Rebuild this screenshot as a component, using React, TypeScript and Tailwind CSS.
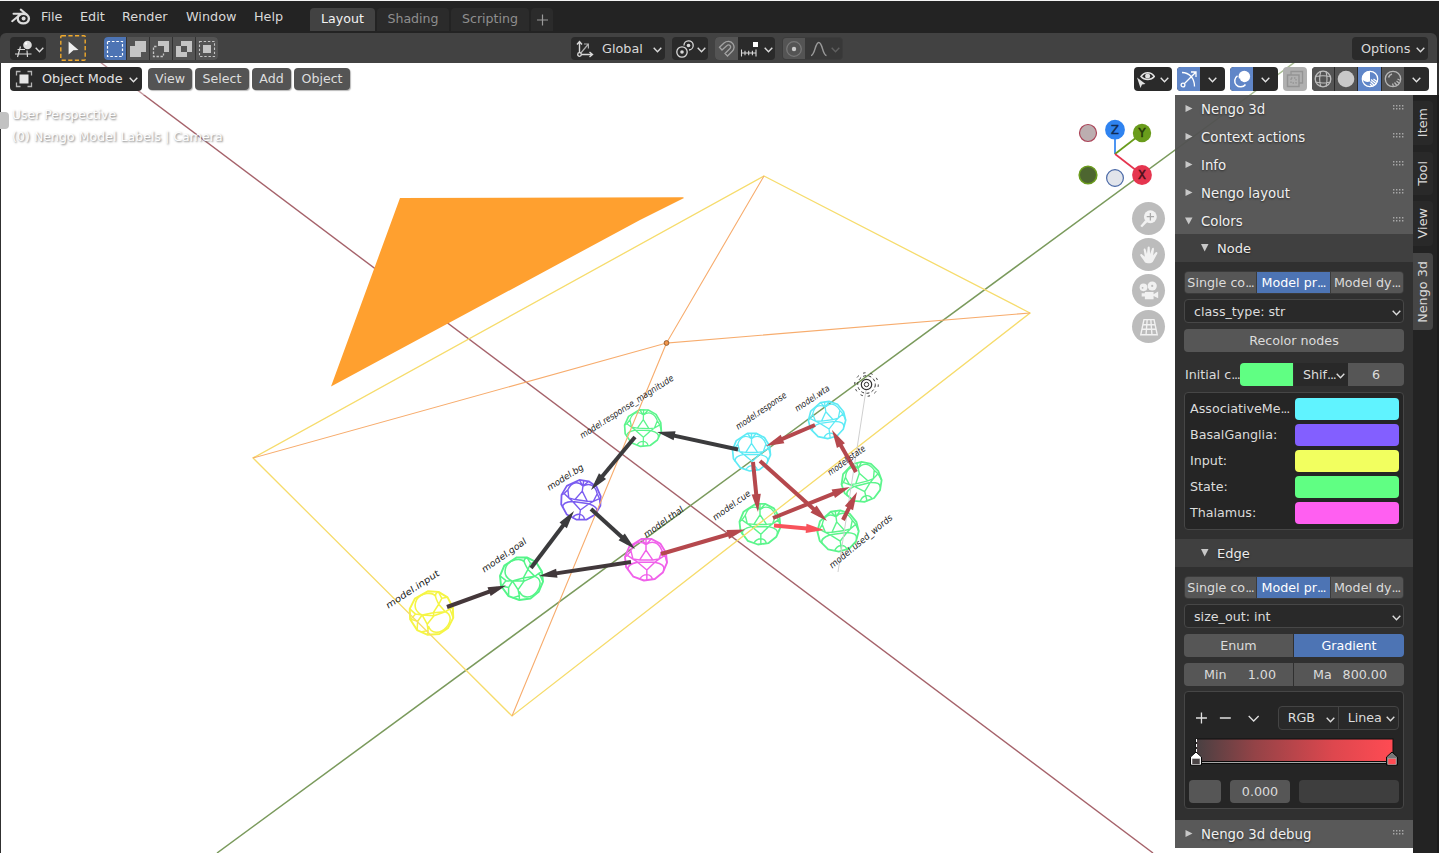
import React from "react";

type Kids = { children?: React.ReactNode };

const Chevron = ({ className = "" }: { className?: string }) => (
  <svg width="9" height="6" viewBox="0 0 9 6" className={"shrink-0 " + className}>
    <path d="M.7 .8l3.8 3.900L8.300 .8" fill="none" stroke="currentColor" strokeWidth="1.4" />
  </svg>
);

const Icon = ({ children, className = "" }: Kids & { className?: string }) => (
  <svg width="18" height="18" viewBox="0 0 18 18" fill="none" stroke="currentColor" strokeWidth="1.3" className={"shrink-0 " + className}>
    {children}
  </svg>
);

const Dots = () => <span className="tracking-[-1.2px]">...</span>;

/* ---------- Scene ---------- */

const OUTLINE = "M-.22 -.98H.25L.68 -.76L.95 -.32L1 .15L.8 .62L.42 .93L-.1 1L-.6 .82L-.95 .35L-1 -.12L-.8 -.6Z";

/* Facing triangles in the middle, one rounded facet in each quadrant. */
const FRONT =
  "M0 -.45L-.3 .02H.32ZM-.4 .13H.42L.04 .5ZM0 -.45V-1M.04 .5V1" +
  "M-.4 .13L-.62 -.02L-.3 .02M.42 .13L.62 -.02L.32 .02M-.62 -.02L-.88 -.2L-.72 -.42L-.62 -.02M.62 -.02L.9 -.2L.76 -.42L.62 -.02" +
  "M0 -.7L-.22 -.98M0 -.7L.25 -.98M-.88 -.2L-1 -.12M.9 -.2L1 .15" +
  "M0 -.7C-.3 -.95 -.6 -.8 -.72 -.42M0 -.7C.3 -.95 .62 -.8 .76 -.42" +
  "M-.4 .13C-.75 .2 -.9 .3 -.86 .5M.42 .13C.75 .2 .9 .3 .84 .5M.04 .72C-.15 .72 -.25 .85 -.3 .93M.04 .72C.2 .72 .3 .85 .3 .95";

/* Turned so that two large facets sit on opposite corners. */
const TURNED =
  "M.3 -.42L.08 -.02L.62 -.1ZM-.42 .12L.12 .12L-.16 .52ZM.08 -.02L-.42 .12M.08 -.02L.12 .12M.62 -.1L.12 .12" +
  "M.3 -.42C.1 -.75 .05 -.9 .25 -.98M.3 -.42L.42 -.7L.25 -.98M.42 -.7L.68 -.76M.62 -.1L.82 -.25L.95 -.32M.82 -.25L1 .15" +
  "M-.42 .12L-.72 .1L-1 -.12M-.72 .1L-.92 .35M-.42 .12L-.6 .42L-.92 .35M-.6 .42L-.6 .82M-.16 .52L-.1 .8L-.1 1M-.1 .8L-.42 .9" +
  "M-.42 .12C-.7 0 -.85 -.2 -.72 -.55C-.55 -.9 0 -.98 .15 -.75M-.1 .6C.05 .95 .45 .95 .72 .6C.95 .3 .9 0 .62 -.1";

type Ball = { x: number; y: number; r: number; c: string; a: number; turned?: boolean };
const balls: Ball[] = [
  { x: 431.5, y: 613, r: 22, c: "#f5f545", a: 4, turned: true },
  { x: 521.5, y: 578.5, r: 21.5, c: "#55f589", a: 0, turned: true },
  { x: 581, y: 500, r: 20, c: "#7a5cf0", a: 8 },
  { x: 643, y: 428, r: 18.5, c: "#5cf58c", a: 2 },
  { x: 646, y: 559.5, r: 21, c: "#f061ea", a: 0 },
  { x: 751.5, y: 452, r: 19, c: "#5eeaf5", a: 0 },
  { x: 827, y: 420, r: 18.5, c: "#5eeaf5", a: -8 },
  { x: 861.5, y: 482, r: 20, c: "#5cf58c", a: -14 },
  { x: 760, y: 524, r: 20.5, c: "#5cf58c", a: 0 },
  { x: 838, y: 531, r: 20.5, c: "#5cf58c", a: -8 },
];

type Edge = [number, number, number, number, string];
const edges: Edge[] = [
  [447, 607, 506, 585.5, "#44373a"],
  [531, 568, 574, 511, "#3b3b3d"],
  [591, 509, 635, 549, "#3b3b3d"],
  [635, 437, 591, 490, "#3b3b3d"],
  [631, 562, 539, 576, "#41383b"],
  [738, 449.5, 657, 432, "#3b3b3d"],
  [661, 554, 745, 529.5, "#b5484d"],
  [773, 518, 850, 487, "#b5484d"],
  [774, 525.5, 824, 530, "#f8535b"],
  [753, 462, 758, 512, "#b5484d"],
  [760, 461, 827, 521, "#b5484d"],
  [843, 520, 857, 492, "#b5484d"],
  [856, 472, 832, 430, "#b5484d"],
  [815, 425, 766, 446, "#b5484d"],
];

const Arrow = ({ e }: { e: Edge }) => {
  const [x1, y1, x2, y2, c] = e;
  const len = Math.hypot(x2 - x1, y2 - y1);
  const ang = (Math.atan2(y2 - y1, x2 - x1) * 180) / Math.PI;
  return (
    <g transform={`translate(${x1} ${y1}) rotate(${ang})`} fill={c}>
      <rect x="0" y="-2" width={len - 9} height="4" />
      <path d={`M${len - 18} -4.6L${len} 0L${len - 18} 4.6Z`} />
    </g>
  );
};

type Label = [string, number, number, number, number];
const labels: Label[] = [
  ["model.input", 388, 609, 440, 575],
  ["model.goal", 484, 573, 527, 543],
  ["model.bg", 549, 491, 584, 469],
  ["model.response_magnitude", 582, 439, 674, 380],
  ["model.thal", 646, 538, 684, 511],
  ["model.response", 738, 430, 787, 397],
  ["model.wta", 797, 412, 830, 390],
  ["model.state", 830, 476, 866, 450],
  ["model.cue", 715, 521, 751, 495],
  ["model.used_words", 832, 569, 893, 519],
];

const SceneLabel = ({ l }: { l: Label }) => {
  const [t, x1, y1, x2, y2] = l;
  const len = Math.hypot(x2 - x1, y2 - y1);
  const ang = (Math.atan2(y2 - y1, x2 - x1) * 180) / Math.PI;
  return (
    <text
      transform={`translate(${x1} ${y1}) rotate(${ang}) skewX(-8)`}
      textLength={len}
      lengthAdjust="spacingAndGlyphs"
      fontSize="9"
      fill="#1c1c1c"
    >
      {t}
    </text>
  );
};

const Scene = () => (
  <svg className="absolute inset-0" width="1439" height="790" viewBox="0 63 1439 790" fontFamily="DejaVu Sans, sans-serif">
    <rect x="1" y="63" width="1436" height="790" fill="#fff" />
    <path d="M100 62L1153 853" stroke="#a5626a" strokeWidth="1.4" />
    <path d="M217 853L1295 62" stroke="#7a9a5c" strokeWidth="1.5" />
    <path d="M400 198L683 197.3L684 198L640 220L331 386.5Z" fill="#ffa02f" />
    {balls.map((b, i) => (
      <g key={i} transform={`translate(${b.x} ${b.y}) rotate(${b.a}) scale(${b.r})`} fill="none" stroke={b.c} strokeLinejoin="round">
        <path d={OUTLINE} strokeWidth=".09" />
        <path d={b.turned ? TURNED : FRONT} strokeWidth=".07" />
      </g>
    ))}
    <path d="M764 176L1030 313L512 716L253 458Z" fill="none" stroke="#f6dc6c" strokeWidth="1.3" />
    <path d="M764 176L666.5 343L1030 313M253 458L666.5 343L512 716" fill="none" stroke="#f7ac6d" strokeWidth="1.1" />
    <circle cx="666.5" cy="343" r="2.4" fill="#f3954a" stroke="#7d4b22" strokeWidth=".8" />
    <path d="M866 390L838 572" stroke="#cfcfcf" strokeWidth="1" />
    <g fill="none" stroke="#333">
      <circle cx="866.5" cy="384.5" r="2.2" strokeWidth="1" />
      <circle cx="866.5" cy="384.5" r="5.2" strokeWidth="1.2" />
      <circle cx="866.5" cy="384.5" r="8.8" strokeDasharray="3 2.4" strokeWidth="1" />
      <circle cx="866.5" cy="384.5" r="11.8" strokeDasharray="2.4 5" strokeWidth="1" />
    </g>
    {edges.map((e, i) => (
      <Arrow key={i} e={e} />
    ))}
    {labels.map((l) => (
      <SceneLabel key={l[0]} l={l} />
    ))}
  </svg>
);

const AxisGizmo = () => (
  <svg className="absolute left-[1074px] top-[23px]" width="82" height="76" viewBox="1074 118 82 76" fontFamily="DejaVu Sans, sans-serif" fontSize="11.5" textAnchor="middle">
    <g strokeWidth="1.7">
      <path d="M1115 154V138" stroke="#2f83f0" />
      <path d="M1115 154L1137 137" stroke="#6a9c1c" />
      <path d="M1115 154L1137 171" stroke="#e5354f" />
    </g>
    <circle cx="1088" cy="133" r="8.5" fill="#bcaeb0" stroke="#ab4458" strokeWidth="1.2" />
    <circle cx="1088" cy="175" r="8.8" fill="#4d6630" stroke="#6b9c1e" strokeWidth="1.6" />
    <circle cx="1115" cy="178" r="8.4" fill="#e2e5eb" stroke="#4968a6" strokeWidth="1.2" />
    <circle cx="1115" cy="129.7" r="9.9" fill="#2f83f0" />
    <circle cx="1142" cy="133" r="9.2" fill="#6a9c1c" />
    <circle cx="1142" cy="175" r="9.9" fill="#e5354f" />
    <g strokeWidth=".5">
      <text x="1115" y="134" fill="#102c55" stroke="#102c55">Z</text>
      <text x="1142" y="137" fill="#24370a" stroke="#24370a">Y</text>
      <text x="1142" y="179" fill="#4d101b" stroke="#4d101b">X</text>
    </g>
  </svg>
);

const NavButton = ({ children }: Kids) => (
  <div className="flex h-[33px] w-[33px] items-center justify-center rounded-full bg-[#bcbcbc]">
    <svg width="22" height="22" viewBox="0 0 24 24" fill="#f1f1f1" stroke="none">
      {children}
    </svg>
  </div>
);

/* ---------- Top bar ---------- */

const TopBar = () => (
  <div className="flex h-[33px] shrink-0 border-t border-[#f4f4f4] bg-[#232323] text-[12.8px] text-[#d9d9d9]">
    <svg className="ml-[11px] mt-[7px] shrink-0" width="20" height="18" viewBox="0 0 20 18" fill="none" stroke="#dcdcdc">
      <ellipse cx="12.3" cy="10.6" rx="5.6" ry="4.8" strokeWidth="2.4" />
      <circle cx="12.6" cy="10.4" r="2" fill="#dcdcdc" stroke="none" />
      <path d="M15.5 6.2L9.8 1.6M2.5 5.8H12M1.2 13.2L9.5 6.3" strokeWidth="2" strokeLinecap="round" />
    </svg>
    <div className="flex h-[31px] items-center pl-[10px]">
      <span className="w-[39px]">File</span>
      <span className="w-[42px]">Edit</span>
      <span className="w-16">Render</span>
      <span className="w-[68px]">Window</span>
      <span className="w-[56px]">Help</span>
    </div>
    <div className="mt-[7px] flex h-[23px] gap-[2px] text-[12.6px] text-[#8f8f8f]">
      <div className="flex w-[65px] items-center justify-center rounded-t bg-[#424242] text-[#f2f2f2]">Layout</div>
      <div className="flex w-[72px] items-center justify-center rounded-t bg-[#2b2b2b]">Shading</div>
      <div className="flex w-[78px] items-center justify-center rounded-t bg-[#2b2b2b]">Scripting</div>
      <div className="flex w-[22px] items-center justify-center rounded-t bg-[#2b2b2b]">
        <svg width="12" height="12" viewBox="0 0 12 12" stroke="#9a9a9a" strokeWidth="1.2">
          <path d="M6.500 .5v11M1 6h11" />
        </svg>
      </div>
    </div>
  </div>
);

/* ---------- Tool settings ---------- */

const Dark = ({ children, className = "" }: Kids & { className?: string }) => (
  <div className={"flex h-[23px] shrink-0 items-center rounded bg-[#2a2a2a] text-[#d9d9d9] " + className}>{children}</div>
);

const ToolSettings = () => (
  <div className="h-[30px] shrink-0 bg-[#232323] pr-[2px]">
    <div className="flex h-[30px] items-center rounded-t-md bg-[#424242] pl-[10px] pt-px text-[12.8px]">
      <Dark className="w-9 gap-[2px] pl-[5px]">
        <Icon>
          <path d="M2.500 9.500H10M0 14H16.500M5.500 6.500L2.500 17M12 10.500L12.500 17" strokeWidth="1.200" />
          <circle cx="12.5" cy="5" r="4.3" fill="#dcdcdc" stroke="none" />
          <circle cx="11" cy="3.500" r="1.2" fill="#fff" stroke="none" />
        </Icon>
        <Chevron className="mt-[2px]" />
      </Dark>
      <svg className="ml-[14px] -mt-px shrink-0" width="26" height="26" viewBox="0 0 26 26">
        <rect x=".8" y=".8" width="24.4" height="24.4" rx="1" fill="#4a4a4a" stroke="#f0a92c" strokeWidth="1.4" strokeDasharray="4.2 2.4" />
        <path d="M8.600 6.500L18.500 15L13.400 15.300L8.600 19.500Z" fill="#efefef" />
      </svg>
      <div className="ml-[18px] flex h-[23px] gap-px overflow-hidden rounded bg-[#333] text-[#c4c4c4]">
        <div className="flex w-[22px] items-center justify-center bg-[#4d74b4] text-white">
          <Icon>
            <rect x="1.5" y="1.5" width="15" height="15" strokeDasharray="2.6 1.8" strokeWidth="1.2" />
          </Icon>
        </div>
        <div className="flex w-[22px] items-center justify-center bg-[#545454]">
          <Icon>
            <path d="M6 1h11v11h-5v5H1V6h5z" fill="currentColor" stroke="none" />
          </Icon>
        </div>
        <div className="flex w-[22px] items-center justify-center bg-[#545454]">
          <Icon>
            <path d="M6 1h11v11h-5V6H6z" fill="currentColor" stroke="none" />
            <path d="M4.500 6.500h-3v10h10v-3" strokeDasharray="2.400 1.600" />
          </Icon>
        </div>
        <div className="flex w-[22px] items-center justify-center bg-[#545454]">
          <Icon>
            <path fillRule="evenodd" d="M6 1h11v11h-5v5H1V6h5zM6 6v6h6V6z" fill="currentColor" stroke="none" />
          </Icon>
        </div>
        <div className="flex w-[22px] items-center justify-center bg-[#545454]">
          <Icon>
            <rect x="5" y="5" width="8" height="8" fill="currentColor" stroke="none" />
            <rect x="1.500" y="1.500" width="15" height="15" strokeDasharray="2.400 1.800" strokeWidth="1.100" />
          </Icon>
        </div>
      </div>
      <Dark className="ml-[353px] w-[94px] pl-[5px]">
        <Icon className="mr-2">
          <path d="M3.500 14.500V2M1 4.500L3.500 1.500L6 4.500M3.500 14.500H16M13.500 12L16.500 14.500L13.500 17" strokeWidth="1.400" />
          <path d="M4 14L12 4.500M8 4h4.400v4.400" strokeWidth="1.200" opacity=".75" />
          <circle cx="3.500" cy="14.500" r="1.800" fill="#2a2a2a" />
        </Icon>
        Global
        <Chevron className="ml-auto mr-[3px] mt-[2px]" />
      </Dark>
      <Dark className="ml-[7px] w-9 gap-[3px] pl-[4px]">
        <Icon>
          <path d="M8 5.500A4.600 4.600 0 1 1 13 10" />
          <circle cx="6" cy="12" r="5.200" />
          <circle cx="12.500" cy="5.500" r="1.800" fill="currentColor" stroke="none" />
          <circle cx="6" cy="12" r="1.800" fill="currentColor" stroke="none" />
        </Icon>
        <Chevron className="mt-[2px]" />
      </Dark>
      <Dark className="ml-[7px] w-[60px] overflow-hidden">
        <div className="flex h-full w-[23px] items-center justify-center bg-[#545454] text-[#a2a2a2]">
          <Icon>
            <path d="M1.500 7.200L6 3C9 .5 13 1 15 3.800C17 7 16 9.500 14 11.500L9.500 16L7 13.500L11.500 9C13 7.500 13 6.500 12 5.500C11 4.500 9.800 4.800 8.500 6L4 10Z" />
          </Icon>
        </div>
        <Icon className="ml-[2px] overflow-visible">
          <path d="M1.500 9.500v7M16 9.500v7M1.500 13H16M5 10.800v4.500M8.700 10.800v4.500M12.400 10.800v4.500" strokeWidth="1.100" />
          <rect x="13" y="2" width="5" height="5" fill="#fff" stroke="none" />
        </Icon>
        <Chevron className="ml-[6px] mt-[2px]" />
      </Dark>
      <div className="ml-[7px] flex h-[23px] w-[61px] shrink-0 items-center overflow-hidden rounded border border-[#3c3c3c] bg-[#383838]">
        <div className="flex h-full w-[22px] items-center justify-center bg-[#545454] text-[#777]">
          <Icon>
            <circle cx="9" cy="9" r="7.300" />
            <circle cx="9" cy="9" r="2.200" fill="#c9c9c9" stroke="none" />
          </Icon>
        </div>
        <Icon className="ml-[5px] text-[#999]">
          <path d="M1 15.500C5 15.500 5 2.500 8.800 2.500S12.500 15.500 16.500 15.500" strokeWidth="1.500" />
        </Icon>
        <Chevron className="ml-[3px] mt-[2px] text-[#606060]" />
      </div>
      <Dark className="ml-auto mr-[9px] w-[76px] pl-[9px]">
        Options
        <Chevron className="ml-auto mr-[3px] mt-[2px]" />
      </Dark>
    </div>
  </div>
);

/* ---------- Viewport header ---------- */

const MenuButton = ({ children, className = "" }: Kids & { className?: string }) => (
  <div className={"flex h-[22px] items-center justify-center rounded bg-[#545454] text-[#dedede] shadow-[1px_1px_1px_#bbb] " + className}>{children}</div>
);

const Group = ({ children, className = "" }: Kids & { className?: string }) => (
  <div className={"flex h-6 shrink-0 items-center overflow-hidden rounded-[4px] bg-[#2a2a2a] text-[#e2e2e2] " + className}>{children}</div>
);

const Cell = ({ children, className = "" }: Kids & { className?: string }) => (
  <div className={"flex h-full w-[23px] items-center justify-center " + className}>{children}</div>
);

const ViewportHeader = () => (
  <div className="relative mr-[2px] ml-px flex h-8 shrink-0 items-center bg-white/35 pl-[9px] pr-[8px] text-[12.6px]">
    <Group className="w-[132px] pl-[5px] text-[12.800px]">
      <Icon className="mr-[9px]">
        <rect x="4.500" y="4.500" width="9" height="9" fill="#e6e6e6" stroke="none" />
        <path d="M1.500 5.500v-4h4M12.500 1.500h4v4M16.500 12.500v4h-4M5.500 16.500h-4v-4" stroke="#b5b5b5" />
      </Icon>
      Object Mode
      <Chevron className="ml-auto mr-[4px] mt-[2px]" />
    </Group>
    <MenuButton className="ml-[6px] w-[44px]">View</MenuButton>
    <MenuButton className="ml-[3px] w-[54px]">Select</MenuButton>
    <MenuButton className="ml-[3px] w-[39px]">Add</MenuButton>
    <MenuButton className="ml-[3px] w-[56px]">Object</MenuButton>
    <div className="ml-auto flex gap-[5px]">
      <Group className="w-[38px] gap-[5px] pl-[3px]">
        <Icon>
          <path d="M4 6.500C7.500 1.500 14 1.500 17.300 6.500C14 10.500 7.500 10.500 4 6.500Z" strokeWidth="1.500" />
          <circle cx="10.600" cy="6" r="2.500" fill="currentColor" stroke="none" />
          <path d="M0 7.500L8.500 14L5 14.500L3.500 18Z" fill="currentColor" stroke="none" />
        </Icon>
        <Chevron className="mt-[2px]" />
      </Group>
      <Group className="w-12">
        <Cell className="bg-[#6086c8] text-white">
          <Icon>
            <path d="M2 2.500C9 2.500 14.500 8 14.500 16.500M4.500 13.500L15.500 2.500M11 2h5v5" strokeWidth="1.300" />
            <circle cx="3" cy="15" r="1.900" />
          </Icon>
        </Cell>
        <Cell className="w-[25px]">
          <Chevron className="mt-[2px]" />
        </Cell>
      </Group>
      <Group className="w-12">
        <Cell className="bg-[#6086c8] text-white">
          <Icon>
            <circle cx="11.300" cy="6.500" r="5.800" fill="currentColor" stroke="none" />
            <path d="M4.500 5.800A6 6 0 1 0 12.500 14.500" strokeWidth="1.500" />
            <path d="M6.500 8.500A4 4 0 0 0 10 12.500" stroke="#6086c8" />
          </Icon>
        </Cell>
        <Cell className="w-[25px]">
          <Chevron className="mt-[2px]" />
        </Cell>
      </Group>
      <div className="flex h-6 w-6 items-center justify-center rounded-[4px] bg-[#b0b0b0] text-[#949494]">
        <Icon>
          <path d="M5 5V1.500h11.500V13H13" />
          <rect x="1.500" y="5" width="11.500" height="11.500" strokeWidth="1.500" />
          <rect x="5" y="8" width="5" height="5" strokeDasharray="1.500 1.500" />
        </Icon>
      </div>
      <Group className="w-[117px] gap-px">
        <Cell className="w-[22px] bg-[#545454] text-[#bdbdbd]">
          <Icon>
            <circle cx="9" cy="9" r="7.800" />
            <path d="M1.500 6.500Q9 5 16.500 6.500M1.500 12Q9 14 16.500 12M6.800 1.500Q4.500 9 6.800 16.500M12 1.500Q14 9 12 16.500" strokeWidth="1.100" />
          </Icon>
        </Cell>
        <Cell className="w-[22px] bg-[#545454] text-[#c9c9c9]">
          <Icon>
            <circle cx="9" cy="9" r="8.300" fill="currentColor" stroke="none" />
          </Icon>
        </Cell>
        <Cell className="w-[22px] bg-[#6086c8] text-white">
          <Icon>
            <circle cx="9" cy="9" r="7.700" />
            <path d="M9 9V1.300A7.700 7.700 0 0 0 1.300 9Z" fill="currentColor" stroke="none" />
            <path d="M9 9V1.300A7.700 7.700 0 0 0 1.300 9C3 11.500 6 12.500 9 11.500Z" fill="currentColor" stroke="none" />
            <path d="M10 9.500L15.500 14M12.500 9L16.500 12M9.500 11.500L13.500 15.500M9 14L11.500 16.500" />
          </Icon>
        </Cell>
        <Cell className="w-[22px] bg-[#545454] text-[#b5b5b5]">
          <Icon>
            <circle cx="9" cy="9" r="7.700" />
            <path d="M4.500 7.500A5 5 0 0 1 8 4" strokeWidth="1.600" />
            <path d="M13.500 9L16.500 10.500M12.500 11L15.500 13.500M10.500 12.500L13 15.500M8.500 13.500L9.500 16.500" strokeWidth="1.300" />
          </Icon>
        </Cell>
        <Cell className="w-[25px]">
          <Chevron className="mt-[2px]" />
        </Cell>
      </Group>
    </div>
  </div>
);

/* ---------- Sidebar ---------- */

const Grip = () => (
  <svg className="mb-[5px] ml-auto mr-[8px]" width="12" height="5" viewBox="0 0 12 5" fill="#a8a8a8">
    <path d="M0 0h1.400v1.400H0zM3 0h1.400v1.400H3zM6 0h1.400v1.400H6zM9 0h1.400v1.400H9zM0 3h1.400v1.400H0zM3 3h1.400v1.400H3zM6 3h1.400v1.400H6zM9 3h1.400v1.400H9z" />
  </svg>
);

const PanelHeader = ({ title, open }: { title: string; open?: boolean }) => (
  <div className="flex h-7 shrink-0 items-center bg-[#525252]/96 pl-[9px] pt-[2px] text-[13.3px] text-[#f0f0f0] [text-shadow:0_1px_2px_#0008]">
    <svg width="9" height="9" viewBox="0 0 9 9" fill="#c8c8c8" className="mb-[4px] mr-2">
      <path d={open ? "M1 1.500H8.500L4.700 8.500Z" : "M1.500 1V8L8.500 4.500Z"} />
    </svg>
    {title}
    <Grip />
  </div>
);

const SubHeader = ({ title }: { title: string }) => (
  <div className="flex h-7 shrink-0 items-center bg-[#404040] pl-[25px] pt-[2px] text-[13px] text-[#ececec] [text-shadow:0_1px_2px_#0008]">
    <svg width="9" height="9" viewBox="0 0 9 9" fill="#c8c8c8" className="mb-[3px] mr-2">
      <path d="M1 1H8.500L4.700 8.500Z" />
    </svg>
    {title}
  </div>
);

const ModeTabs = () => (
  <div className="flex h-[23px] shrink-0 gap-px overflow-hidden rounded border border-[#3b3b3b] bg-[#3b3b3b] text-[12.700px] text-[#dcdcdc]">
    <div className="flex w-[71px] items-center justify-center bg-[#565656]">Single co<Dots /></div>
    <div className="flex w-[73px] items-center justify-center bg-[#4d74b4] text-white">Model pr<Dots /></div>
    <div className="flex flex-1 items-center justify-center bg-[#565656]">Model dy<Dots /></div>
  </div>
);

const Dropdown = ({ children }: Kids) => (
  <div className="mt-[5px] flex h-6 shrink-0 items-center rounded border border-[#474747] bg-[#292929] pl-[9px] pr-[2px] pt-px">
    {children}
    <Chevron className="ml-auto mt-[3px]" />
  </div>
);

const Swatch = ({ label, color }: { label: React.ReactNode; color: string }) => (
  <div className="flex h-[22px] items-center">
    <span className="w-[105px]">{label}</span>
    <div className={"h-[22px] w-[104px] rounded " + color} />
  </div>
);

const Sidebar = () => (
  <div className="relative -mt-px flex w-[238px] shrink-0 flex-col pt-px">
    <PanelHeader title="Nengo 3d" />
    <PanelHeader title="Context actions" />
    <PanelHeader title="Info" />
    <PanelHeader title="Nengo layout" />
    <PanelHeader title="Colors" open />
    <div className="-mt-px flex shrink-0 flex-col">
      <SubHeader title="Node" />
      <div className="flex h-[277px] shrink-0 flex-col bg-[#303030] pl-[9px] pr-[9px] pt-[9px] text-[12.700px] text-[#dcdcdc]">
        <ModeTabs />
        <Dropdown>class_type: str</Dropdown>
        <div className="mt-[6px] flex h-[23px] shrink-0 items-center justify-center rounded bg-[#565656]">Recolor nodes</div>
        <div className="mt-[11px] flex h-[23px] shrink-0 items-center">
          <span className="w-[56px] shrink-0 whitespace-nowrap pl-px">Initial c<Dots /></span>
          <div className="h-[23px] w-[53px] rounded-l bg-[#60ff83]" />
          <div className="ml-px flex h-[23px] w-[54px] items-center bg-[#292929] pl-[9px]">
            Shif<Dots />
            <Chevron className="ml-auto mr-[3px] mt-[3px]" />
          </div>
          <div className="flex h-[23px] flex-1 items-center justify-center rounded-r bg-[#565656]">6</div>
        </div>
        <div className="mt-[6px] flex h-[138px] shrink-0 flex-col gap-1 rounded border border-[#464646] bg-[#252525] pl-[5px] pt-[5px]">
          <Swatch label={<>AssociativeMe<Dots /></>} color="bg-[#60f3ff]" />
          <Swatch label="BasalGanglia:" color="bg-[#835fff]" />
          <Swatch label="Input:" color="bg-[#f2ff5f]" />
          <Swatch label="State:" color="bg-[#60ff83]" />
          <Swatch label="Thalamus:" color="bg-[#ff5ff1]" />
        </div>
      </div>
      <SubHeader title="Edge" />
      <div className="flex h-[253px] shrink-0 flex-col bg-[#303030] pl-[9px] pr-[9px] pt-[9px] text-[12.700px] text-[#dcdcdc]">
        <ModeTabs />
        <Dropdown>size_out: int</Dropdown>
        <div className="mt-[6px] flex h-[23px] shrink-0 gap-px overflow-hidden rounded">
          <div className="flex w-[109px] items-center justify-center bg-[#565656]">Enum</div>
          <div className="flex flex-1 items-center justify-center bg-[#4d74b4] text-white">Gradient</div>
        </div>
        <div className="mt-[6px] flex h-[23px] shrink-0 gap-px overflow-hidden rounded">
          <div className="flex w-[109px] items-center justify-between bg-[#565656] pl-5 pr-[17px]">
            <span>Min</span>
            <span>1.00</span>
          </div>
          <div className="flex flex-1 items-center justify-between bg-[#565656] pl-[19px] pr-[17px]">
            <span>Ma</span>
            <span>800.00</span>
          </div>
        </div>
        <div className="mt-[5px] flex h-[118px] shrink-0 flex-col rounded border border-[#464646] bg-[#252525] pl-1 pr-1 pt-[14px]">
          <div className="flex h-6 items-center">
            <svg width="66" height="14" viewBox="0 0 66 14" fill="none" stroke="#e0e0e0" strokeWidth="1.300" className="ml-[6px]">
              <path d="M1 7h11M6.500 1.500v11M25 7h11M54 5l5 5l5-5" />
            </svg>
            <div className="ml-[17px] flex h-6 w-[122px] items-center rounded border border-[#444] bg-[#292929]">
              <div className="flex h-full w-[60px] items-center justify-between border-r border-[#444] pl-[9px] pr-[3px]">
                RGB
                <Chevron className="mt-[3px]" />
              </div>
              <div className="flex flex-1 items-center justify-between pl-[9px] pr-[3px]">
                Linea
                <Chevron className="mt-[3px]" />
              </div>
            </div>
          </div>
          <svg className="mt-2 shrink-0" width="212" height="30" viewBox="0 0 212 30">
            <defs>
              <linearGradient id="ramp">
                <stop offset="0" stopColor="#484042" />
                <stop offset=".3" stopColor="#944347" />
                <stop offset=".7" stopColor="#de474e" />
                <stop offset="1" stopColor="#ff4b53" />
              </linearGradient>
            </defs>
            <rect x="7" y="1" width="197" height="24" fill="url(#ramp)" stroke="#111" />
            <path d="M7 23.500H204" stroke="#0a0a0a" />
            <path d="M7 24.500H204" stroke="#a8a8a8" />
            <path d="M7 25.500H204" stroke="#0a0a0a" />
            <path d="M7.500 1V16" stroke="#fff" strokeDasharray="3 2" />
            <path d="M1.500 19L7 14L12.500 19V27H1.500Z" fill="#fff" stroke="#080808" />
            <rect x="3" y="20.500" width="8" height="6" fill="#4a4445" stroke="#ddd" strokeWidth=".6" />
            <path d="M197.500 19L203 14L208.500 19V27H197.500Z" fill="#777" stroke="#080808" />
            <rect x="199" y="20.500" width="8" height="6" fill="#ff4b53" stroke="#aaa" strokeWidth=".6" />
          </svg>
          <div className="mt-[12px] flex h-[23px] shrink-0">
            <div className="w-8 rounded bg-[#565656]" />
            <div className="ml-[9px] flex w-[60px] items-center justify-center rounded bg-[#565656]">0.000</div>
            <div className="ml-[9px] flex-1 rounded bg-[#3e3e3e]" />
          </div>
        </div>
      </div>
      <PanelHeader title="Nengo 3d debug" />
    </div>
  </div>
);

const SideTab = ({ label, className }: { label: string; className: string }) => (
  <div className={"flex w-5 shrink-0 items-center justify-center rounded-r " + className}>
    <span className="rotate-180 whitespace-nowrap [writing-mode:vertical-rl]">{label}</span>
  </div>
);

const TabStrip = () => (
  <div className="relative flex w-[26px] shrink-0 flex-col border-r-2 border-[#1b1b1b] bg-[#232323] pt-[6px] text-[12.800px] text-[#d8d8d8]">
    <SideTab label="Item" className="h-[44px] bg-[#292929]" />
    <SideTab label="Tool" className="mt-[7px] h-[43px] bg-[#292929]" />
    <SideTab label="View" className="mt-[6px] h-[45px] bg-[#292929]" />
    <SideTab label="Nengo 3d" className="mt-[7px] h-[77px] bg-[#464646]" />
  </div>
);

export default function App() {
  return (
    <div className="flex h-[853px] w-[1439px] flex-col overflow-hidden whitespace-nowrap bg-[#303030] font-['DejaVu_Sans',sans-serif]">
      <TopBar />
      <ToolSettings />
      <div className="relative flex min-h-0 flex-1 flex-col">
        <Scene />
        <ViewportHeader />
        <div className="relative flex min-h-0 flex-1">
          <div className="flex flex-1 justify-between">
            <div className="flex pt-[9px]">
              <div className="mt-[8px] h-[17px] w-[9px] rounded-r bg-[#c2c2c2]" />
              <div className="ml-[3px] text-[12.500px] leading-[21.500px] text-[#fdfdfd] [text-shadow:1px_1px_2px_#777]">
                <div className="tracking-[-0.05px]">User Perspective</div>
                <div className="tracking-[.05px]">(0) Nengo Model Labels | Camera</div>
              </div>
            </div>
            <AxisGizmo />
            <div className="mr-[10px] mt-[107px] flex flex-col gap-[3px]">
              <NavButton>
                <circle cx="13.500" cy="9.500" r="7" />
                <path d="M8 13L2.500 19.500L4.500 21L10 15.500Z" />
                <path d="M13.500 5.500v8M9.500 9.500h8" stroke="#aaa" strokeWidth="1.400" />
              </NavButton>
              <NavButton>
                <path d="M7.500 20C6 17 4 15 2.500 12.500C2 11 3.500 10.500 4.500 11.500L7.500 14L6.200 6.500C6 4.800 8 4.500 8.300 6L9.800 11L10.500 3.800C10.700 2.300 12.700 2.300 12.800 3.800L13.200 11L15.300 5C15.800 3.500 17.700 4 17.400 5.700L16.500 12.500L19 9.300C20 8 21.700 9 21 10.500L17 18C16 20.500 14 21 12 21C10 21 8.500 21 7.500 20Z" />
              </NavButton>
              <NavButton>
                <circle cx="6" cy="8" r="4.200" />
                <circle cx="15.500" cy="6.500" r="5" />
                <path d="M7.500 13H17V15.500L22 12.500V20L17 17.500V21H7.500V18H4V14.500H7.500Z" />
                <circle cx="5" cy="8.500" r="1" fill="#bbb" />
                <circle cx="15.500" cy="6.500" r="1.200" fill="#bbb" />
              </NavButton>
              <NavButton>
                <path d="M6.500 4L3 20.500H21L17.500 4ZM5.600 9.500H18.400M4.500 14.500H19.500M10 4L8.800 20.500M14 4L15.200 20.500" fill="none" stroke="#f1f1f1" strokeWidth="1.500" />
              </NavButton>
            </div>
          </div>
          <Sidebar />
          <TabStrip />
        </div>
      </div>
    </div>
  );
}
